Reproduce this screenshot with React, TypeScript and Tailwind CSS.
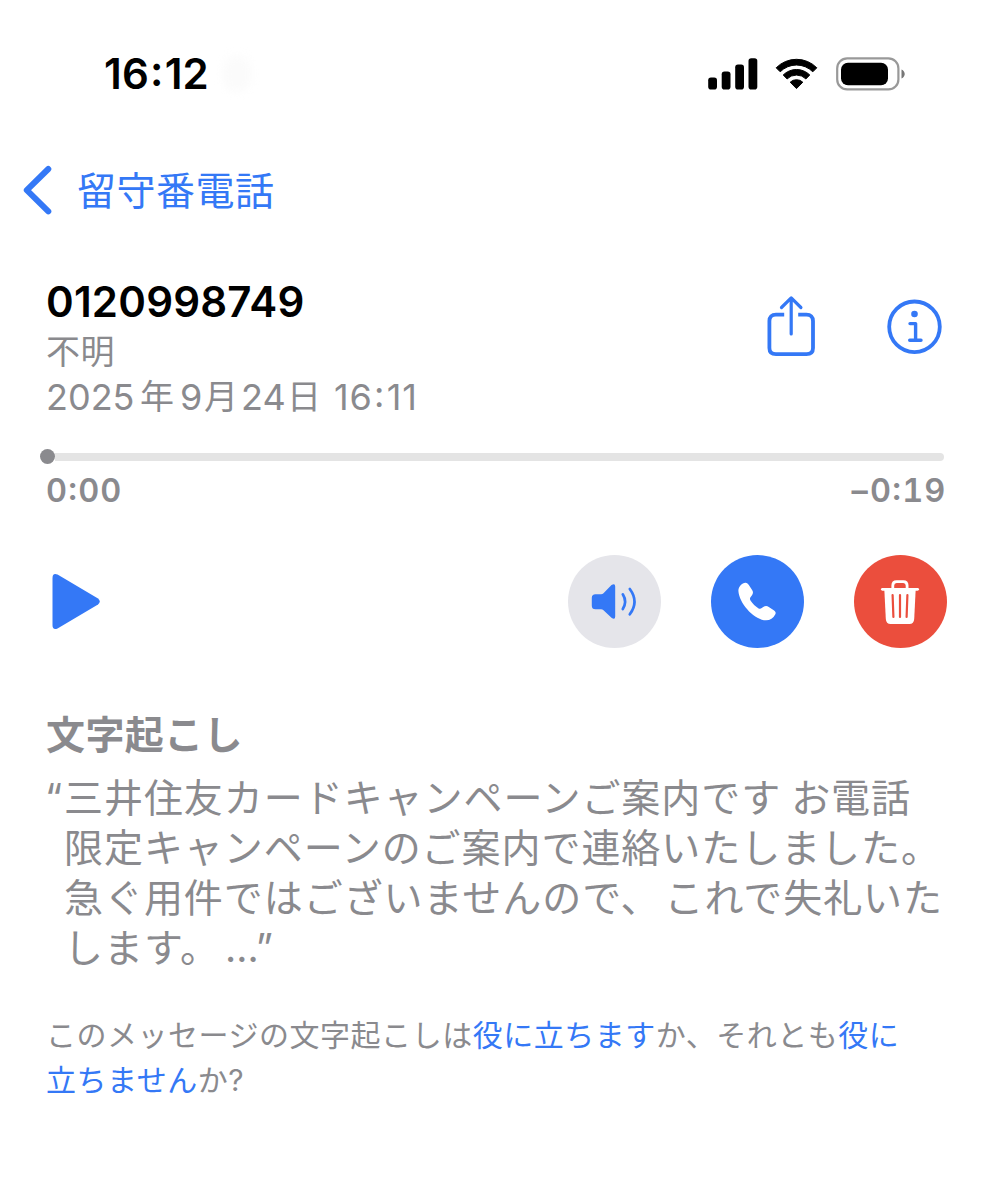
import type { ReactNode } from "react";

const transcript = [
  ["三井住友カードキャンペーンご案内です", "お電話"],
  ["限定キャンペーンのご案内で連絡いたしました。"],
  ["急ぐ用件ではございませんので、", "これで失礼いた"],
  ["します。", "…”"],
];

const gaps = ["gap-[10px]", "", "gap-[4px]", "gap-[5px]"];

function Colon({ className = "" }: { className?: string }) {
  return <span className={`relative -top-[0.07em] ${className}`}>:</span>;
}

function StatusBar() {
  return (
    <header className="flex h-[147px] items-center pl-[104px] pr-[81px]">
      <span className="w-[105px] whitespace-nowrap text-[42px] font-semibold leading-none tracking-[0.2px]">
        16<Colon className="mx-px" />12
      </span>
      <span className="ml-[14px] h-9 w-7 rounded-full bg-[#fbfbfb] blur-xs" />
      <div className="ml-auto flex items-center">
        <svg width="50" height="32" viewBox="0 0 50 32">
          <rect x="0.2" y="19.5" width="8.8" height="12" rx="2.8" />
          <rect x="13.7" y="13.5" width="8.8" height="18" rx="2.8" />
          <rect x="27.2" y="6.5" width="8.8" height="25" rx="2.8" />
          <rect x="40.5" y="0.3" width="8.8" height="31.2" rx="2.8" />
        </svg>
        <svg className="ml-[17px]" width="43" height="32" viewBox="0 0 43 32">
          <path d="M1.2 9.8 A28.5 28.5 0 0 1 41.8 9.8 L37.8 13.8 A23 23 0 0 0 5.2 13.8 Z" stroke="#000" strokeWidth="1" strokeLinejoin="round" />
          <path d="M8.2 17 A18.8 18.8 0 0 1 34.8 17 L30.9 20.9 A13.4 13.4 0 0 0 12.1 20.9 Z" stroke="#000" strokeWidth="1" strokeLinejoin="round" />
          <path d="M15.2 24.2 A9.2 9.2 0 0 1 27.8 24.2 L21.5 30.6 Z" stroke="#000" strokeWidth="1" strokeLinejoin="round" />
        </svg>
        <svg className="ml-[18px]" width="70" height="34" viewBox="0 0 70 34">
          <rect x="1.2" y="1.4" width="61.2" height="31" rx="10" fill="none" stroke="#999" strokeWidth="2.2" />
          <rect x="5" y="5.7" width="47" height="22.5" rx="7" />
          <path d="M65.5 12.5 C69.8 14.2 69.8 19.8 65.5 21.5 Z" fill="#777" />
        </svg>
      </div>
    </header>
  );
}

function RoundButton({ label, className, children }: { label: string; className: string; children: ReactNode }) {
  return (
    <button aria-label={label} className={`flex size-[93px] items-center justify-center rounded-full ${className}`}>
      {children}
    </button>
  );
}

function Controls() {
  return (
    <div className="mt-[40px] flex h-[93px] items-center justify-between pl-[52px] pr-10">
      <button aria-label="再生">
        <svg width="49" height="58" viewBox="0 0 49 58" fill="#3478f6">
          <path d="M0.5 5 Q0.5 -0.5 5.5 1.5 L46 25.5 Q49.5 28.5 46 31.5 L5.5 55.5 Q0.5 57.5 0.5 52 Z" />
        </svg>
      </button>
      <div className="flex gap-[50px]">
        <RoundButton label="スピーカー" className="bg-[#e5e5ea]">
          <svg width="93" height="93" viewBox="0 0 93 93" fill="none">
            <path d="M27.5 39.2 H33 Q34.5 39.2 35.5 38.2 L43.5 30 Q47.2 27.8 47.2 31.5 V61.5 Q47.2 65.3 43.5 62.8 L35.5 55.3 Q34.5 54.3 33 54.3 H27.5 Q23.8 54.3 23.8 50.8 V42.7 Q23.8 39.2 27.5 39.2 Z" fill="#3478f6" />
            <path d="M54.8 39.3 Q59.4 46.7 54.8 54 M61.8 34 Q71.2 46.7 61.8 59.3" stroke="#3478f6" strokeWidth="2.7" strokeLinecap="round" />
          </svg>
        </RoundButton>
        <RoundButton label="発信" className="bg-[#3478f6]">
          <svg width="93" height="93" viewBox="0 0 93 93" fill="#fff">
            <path d="M27.4 36 C27.2 32 31 28 34.4 27.8 C36 27.7 37 28.8 38 30.2 L41.1 35 C42.4 37 42.2 38.8 40.8 40.6 L39.5 42.2 C38.7 43.4 38.8 44.4 39.5 45.5 C41.5 48.7 44.5 51.5 47.6 53.4 C48.7 54.1 49.6 54 50.8 53.1 L52.2 52.1 C54 50.8 55.9 50.7 57.8 51.9 L62.4 54.9 C64.6 56.4 65.2 57.6 64.2 59.5 C62.2 63.2 59 65.5 54.5 65.3 C43 64.7 28.2 48.5 27.4 36 Z" />
          </svg>
        </RoundButton>
        <RoundButton label="削除" className="bg-[#eb4e3d]">
          <svg width="93" height="93" viewBox="0 0 93 93" fill="none" stroke="#fff">
            <path d="M38.8 34 V30.5 Q38.8 26.6 42.6 26.6 H49.3 Q53.1 26.6 53.1 30.5 V34" strokeWidth="2.8" />
            <path d="M28.4 34.3 H63.6" strokeWidth="2.8" strokeLinecap="round" />
            <path d="M30.3 34 H61.7 L60.2 64 Q59.9 69 55.4 69 H36.6 Q32.1 69 31.8 64 Z" fill="#fff" stroke="none" />
            <path d="M38.6 40 L39.4 62 M46 40 V62 M53.4 40 L52.6 62" stroke="#eb4e3d" strokeWidth="2.2" strokeLinecap="round" />
          </svg>
        </RoundButton>
      </div>
    </div>
  );
}

export default function App() {
  return (
    <main className="h-[1200px] w-[987px] overflow-hidden bg-white font-['Inter','Noto_Sans_CJK_JP',sans-serif] text-black">
      <StatusBar />

      <nav className="flex h-[85px] items-center pl-[22px] text-[#3478f6]">
        <svg width="32" height="50" viewBox="0 0 32 50" fill="none">
          <path d="M26.3 4 L4.8 25.2 L26.3 46.4" stroke="currentColor" strokeWidth="6" strokeLinecap="round" strokeLinejoin="round" />
        </svg>
        <span className="ml-[23px] pt-0.5 text-[39px] leading-none tracking-[0.5px]">留守番電話</span>
      </nav>

      <section className="flex h-[217px] justify-between pl-[46px] pr-[44px] pt-[46px]">
        <div>
          <h1 className="h-[48px] text-[42px] font-semibold leading-[48px] tracking-[0.2px]">0120998749</h1>
          <p className="h-[47px] text-[34px] leading-[52px] tracking-[0.6px] text-[#8a8a8e]">不明</p>
          <p className="flex h-[46px] whitespace-nowrap text-[36px] leading-[48px] text-[#8a8a8e]">
            <span className="w-[94px]">2025</span>
            <span className="w-[40px] text-[34px]">年</span>
            <span className="w-[24px]">9</span>
            <span className="w-[37px] text-[34px]">月</span>
            <span className="w-[46px]">24</span>
            <span className="w-[47px] text-[34px]">日</span>
            <span className="tracking-[0.8px]">16<Colon className="mx-[1.5px]" />11</span>
          </p>
        </div>
        <div className="flex gap-[69px] pt-[17px] text-[#3478f6]">
          <svg width="50" height="62" viewBox="0 0 50 62" fill="none" stroke="currentColor" strokeWidth="3.8">
            <path d="M18.2 19.7 H10 Q3.4 19.7 3.4 26 V53 Q3.4 59.2 10 59.2 H40.4 Q47 59.2 47 53 V26 Q47 19.7 40.4 19.7 H32.2" />
            <path d="M25.2 39 V3 M15.5 12.5 L25.2 2.9 L34.9 12.5" strokeWidth="3.2" strokeLinecap="round" strokeLinejoin="round" />
          </svg>
          <svg width="58" height="62" viewBox="0 0 58 62" fill="none" stroke="currentColor">
            <circle cx="29.5" cy="31.8" r="25.3" strokeWidth="3.8" />
            <circle cx="29.5" cy="19" r="3.3" fill="currentColor" stroke="none" />
            <path d="M25 28.6 H30.6 V45 M24.7 45.3 H36" strokeWidth="3.4" strokeLinecap="round" strokeLinejoin="round" />
          </svg>
        </div>
      </section>

      <section className="pl-10 pr-[43px] text-[#8a8a8e]">
        <div className="flex h-[15px] items-center">
          <span className="size-[15px] rounded-full bg-[#8a8a8e]" />
          <span className="h-2 flex-1 rounded-r bg-[#e4e4e4]" />
        </div>
        <div className="-mr-[2px] mt-[3px] flex justify-between pl-[6px] text-[32.5px] font-semibold leading-[48px] tracking-[0.8px] tabular-nums">
          <span>0<Colon className="mx-[0.5px]" />00</span>
          <span>–<span className="ml-[1.5px]">0</span><Colon className="mx-[0.5px]" />19</span>
        </div>
      </section>

      <Controls />

      <section className="pl-[46px] pt-[61px] text-[#8a8a8e]">
        <h2 className="h-[64px] text-[39px] font-bold leading-[52px] tracking-[0.4px]">文字起こし</h2>
        <div className="whitespace-nowrap text-[39px] leading-[50px] tracking-[0.95px]">
          {transcript.map((parts, i) => (
            <p key={i} className="flex h-[50px]">
              <span className="w-[18px]">{i === 0 && <span className="relative -left-px">“</span>}</span>
              <span className={`flex ${gaps[i]}`}>
                {parts.map((part) => (
                  <span key={part} className={part === "…”" ? "tracking-[-0.7px]" : ""}>
                    {part}
                  </span>
                ))}
              </span>
            </p>
          ))}
        </div>
        <p className="mt-[40px] whitespace-nowrap text-[30px] leading-[45px] tracking-[0.52px]">
          このメッセージの文字起こしは<a className="text-[#3478f6]">役に立ちます</a>か、それとも<a className="text-[#3478f6]">役に<br />立ちません</a>か?
        </p>
      </section>
    </main>
  );
}
